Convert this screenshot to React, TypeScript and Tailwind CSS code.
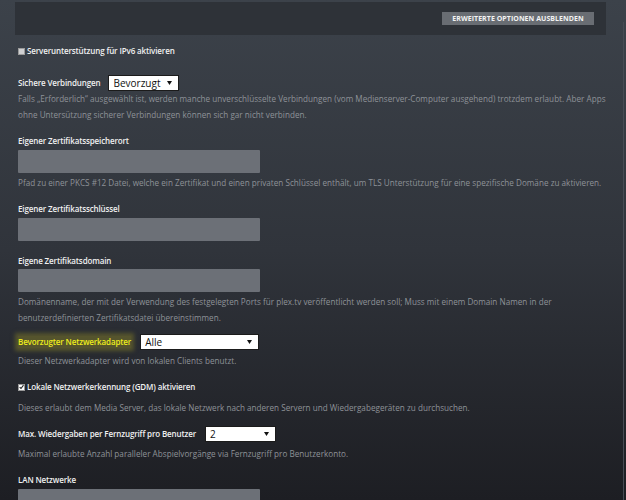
import React from "react";

function Select({ value, width }: { value: string; width: string }) {
  return (
    <div
      className={`${width} h-[16px] bg-white border border-[#1b1b1b] flex items-center justify-between pl-[4px] pr-[6px]`}
    >
      <span className="text-[10px] leading-none text-[#111] font-['Open_Sans',sans-serif]">{value}</span>
      <svg width="5" height="4" viewBox="0 0 5 4">
        <path d="M0 0 L5 0 L2.5 4 Z" fill="#111" />
      </svg>
    </div>
  );
}

function Desc({ children, className = "" }: { children: React.ReactNode; className?: string }) {
  return (
    <p className={`text-[8.15px] leading-[16px] text-[#8e9298] tracking-[0.02px] whitespace-nowrap ${className}`}>
      {children}
    </p>
  );
}

function Label({ children, className = "" }: { children: React.ReactNode; className?: string }) {
  return (
    <div className={`text-[8px] leading-[16px] font-semibold text-[#f0f0f0] tracking-[-0.13px] ${className}`}>
      {children}
    </div>
  );
}

function Input({ className = "", children }: { className?: string; children?: React.ReactNode }) {
  return (
    <div className={`w-[242px] h-[23px] bg-[#6c7077] rounded-[1px] flex items-center px-[7px] ${className}`}>
      {children}
    </div>
  );
}

function Check({ checked }: { checked?: boolean }) {
  return (
    <div
      className={`w-[7px] h-[7px] ${checked ? "bg-white" : "bg-[#cfd0d2]"} border border-[#9a9a9a] flex items-center justify-center`}
    >
      {checked && (
        <svg width="6" height="6" viewBox="0 0 6 6">
          <path d="M0.8 3.2 L2.4 4.8 L5.4 0.8" stroke="#222" strokeWidth="1.3" fill="none" />
        </svg>
      )}
    </div>
  );
}

export default function App() {
  return (
    <div className="relative w-[626px] h-[500px] overflow-hidden bg-gradient-to-b from-[#3c424a] via-[#30343b] to-[#1d1e23] font-['Open_Sans',sans-serif]">
      <div className="absolute right-[2px] top-[22px] bottom-0 w-[1px] bg-[#474c54]" />
      <div className="mt-[2px] ml-[15px] w-[591px] h-[33px] bg-[#2e3238] flex items-center justify-end pr-[12px]">
        <div className="w-[152px] h-[13px] bg-[#696d73] flex items-center justify-center">
          <span className="text-[7px] font-bold text-[#f2f2f2] tracking-[0.05px] leading-none">
            ERWEITERTE OPTIONEN AUSBLENDEN
          </span>
        </div>
      </div>

      <div className="pl-[18px] flex flex-col items-start">
        <div className="mt-[9px] h-[14px] flex items-center gap-[2px]">
          <Check />
          <Label>Serverunterstützung für IPv6 aktivieren</Label>
        </div>

        <div className="mt-[17px] h-[16px] flex items-center gap-[8px]">
          <Label>Sichere Verbindungen</Label>
          <Select value="Bevorzugt" width="w-[71px]" />
        </div>
        <Desc>
          Falls „Erforderlich“ ausgewählt ist, werden manche unverschlüsselte Verbindungen (vom Medienserver-Computer
          ausgehend) trotzdem erlaubt. Aber Apps
          <br />
          ohne Untersützung sicherer Verbindungen können sich gar nicht verbinden.
        </Desc>

        <Label className="mt-[10px]">Eigener Zertifikatsspeicherort</Label>
        <Input className="mt-[1px]" />
        <Desc className="mt-[2px]">
          Pfad zu einer PKCS #12 Datei, welche ein Zertifikat und einen privaten Schlüssel enthält, um TLS Unterstützung
          für eine spezifische Domäne zu aktivieren.
        </Desc>

        <Label className="mt-[10px]">Eigener Zertifikatsschlüssel</Label>
        <Input className="mt-[1px]" />

        <Label className="mt-[12px]">Eigene Zertifikatsdomain</Label>
        <Input />
        <Desc className="mt-[2px]">
          Domänenname, der mit der Verwendung des festgelegten Ports für plex.tv veröffentlicht werden soll; Muss mit
          einem Domain Namen in der
          <br />
          benutzerdefinierten Zertifikatsdatei übereinstimmen.
        </Desc>

        <div className="mt-[8px] h-[16px] flex items-center gap-[9px]">
          <span className="text-[8px] leading-[12px] font-semibold text-[#eeec1c] tracking-[-0.13px] bg-[#55542d] shadow-[0_0_4px_3px_#55542d]">
            Bevorzugter Netzwerkadapter
          </span>
          <Select value="Alle" width="w-[119px]" />
        </div>
        <Desc className="mt-[3px]">Dieser Netzwerkadapter wird von lokalen Clients benutzt.</Desc>

        <div className="mt-[11px] h-[14px] flex items-center gap-[2px]">
          <Check checked />
          <Label>Lokale Netzwerkerkennung (GDM) aktivieren</Label>
        </div>
        <Desc className="mt-[6px]">
          Dieses erlaubt dem Media Server, das lokale Netzwerk nach anderen Servern und Wiedergabegeräten zu
          durchsuchen.
        </Desc>

        <div className="mt-[10px] h-[16px] flex items-center gap-[9px]">
          <Label>Max. Wiedergaben per Fernzugriff pro Benutzer</Label>
          <Select value="2" width="w-[71px]" />
        </div>
        <Desc className="mt-[4px]">Maximal erlaubte Anzahl paralleler Abspielvorgänge via Fernzugriff pro Benutzerkonto.</Desc>

        <Label className="mt-[10px]">LAN Netzwerke</Label>
        <Input className="mt-[1px] items-end pb-[4px]">
          <span className="text-[9px] leading-none text-[#1c1c1c]">172.20.0.0/24,172.16.1.0/24,172.21.200.0/24</span>
        </Input>
      </div>
    </div>
  );
}
